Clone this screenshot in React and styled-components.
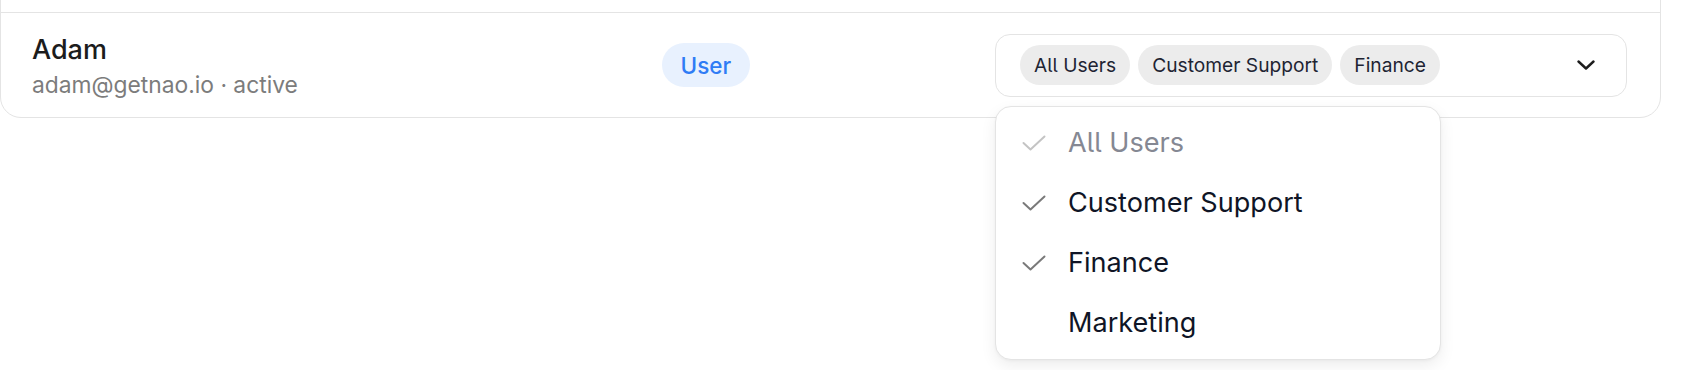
import React from "react";
import styled, { createGlobalStyle } from "styled-components";

const GlobalStyle = createGlobalStyle`
  html, body {
    margin: 0;
    padding: 0;
    background: #ffffff;
  }
  body {
    font-family: Inter, "Noto Sans", "Liberation Sans", sans-serif;
    font-feature-settings: "cv05" 1;
    -webkit-font-smoothing: antialiased;
  }
`;

const Page = styled.div`
  padding: 0 21px 0 0;
  height: 370px;
  overflow: hidden;
`;

const Card = styled.div`
  margin-top: -50px;
  border: 1px solid #e4e4e4;
  border-radius: 21px;
  background: #fff;
`;

const PrevRow = styled.div`
  height: 61px;
`;

const Row = styled.div`
  display: grid;
  grid-template-columns: 1fr 333px 632px;
  align-items: center;
  height: 104px;
  padding: 0 33px 0 31px;
  border-top: 1px solid #e4e4e4;
`;

const NameBlock = styled.div`
  display: flex;
  flex-direction: column;
`;

const Name = styled.div`
  font-size: 27px;
  line-height: 36px;
  font-weight: 500;
  color: #1c1c1c;
`;

const Meta = styled.div`
  margin-top: 3px;
  font-size: 22.8px;
  line-height: 28px;
  color: #7c7c7c;
`;

const RoleCell = styled.div`
  display: flex;
`;

const Badge = styled.span`
  display: inline-flex;
  align-items: center;
  height: 44px;
  padding: 0 18.5px;
  border-radius: 999px;
  background: #e8f1fe;
  color: #2f7cf5;
  font-size: 22.5px;
  font-weight: 500;
`;

const SelectWrap = styled.div`
  position: relative;
`;

const Select = styled.div`
  display: flex;
  align-items: center;
  box-sizing: border-box;
  height: 63px;
  padding: 0 31px 0 24px;
  border: 1px solid #e4e4e4;
  border-radius: 15px;
  background: #fff;
`;

const Chips = styled.div`
  display: flex;
  flex: 1;
  gap: 8px;
`;

const Chip = styled.span`
  display: inline-flex;
  align-items: center;
  height: 40px;
  padding: 0 14px;
  border-radius: 999px;
  background: #ececec;
  color: #1e2433;
  font-size: 19.2px;
`;

const Menu = styled.div`
  position: absolute;
  top: calc(100% + 9px);
  left: 0;
  width: 446px;
  box-sizing: border-box;
  padding: 6px 0;
  border: 1px solid #e4e4e4;
  border-radius: 16px;
  background: #fff;
  box-shadow: 0 6px 16px rgba(0, 0, 0, 0.07), 0 1px 3px rgba(0, 0, 0, 0.04);
`;

const Item = styled.div`
  display: flex;
  align-items: center;
  gap: 22px;
  height: 60px;
  padding-left: 26px;
  font-size: 27.1px;
  color: ${(p) => (p.muted ? "#858893" : "#0f1526")};
`;

const CheckSlot = styled.span`
  display: inline-flex;
  width: 24px;
  color: ${(p) => (p.muted ? "#c4c4c4" : "#7a7a7a")};
`;

const Check = () => (
  <svg width="24" height="16" viewBox="0 0 24 16" fill="none">
    <path
      d="M1.5 8 L8.5 14.5 L22.5 1.5"
      stroke="currentColor"
      strokeWidth="2"
      strokeLinecap="round"
      strokeLinejoin="round"
    />
  </svg>
);

const Chevron = () => (
  <svg width="18" height="10" viewBox="0 0 18 10" fill="none">
    <path
      d="M1.5 1.5 L9 8.5 L16.5 1.5"
      stroke="#1d1d1d"
      strokeWidth="2.4"
      strokeLinecap="round"
      strokeLinejoin="round"
    />
  </svg>
);

const groups = [
  { label: "All Users", checked: true, muted: true },
  { label: "Customer Support", checked: true },
  { label: "Finance", checked: true },
  { label: "Marketing", checked: false },
];

export default function App() {
  const selected = groups.filter((g) => g.checked);
  return (
    <Page>
      <GlobalStyle />
      <Card>
        <PrevRow />
        <Row>
          <NameBlock>
            <Name>Adam</Name>
            <Meta>adam@getnao.io · active</Meta>
          </NameBlock>
          <RoleCell>
            <Badge>User</Badge>
          </RoleCell>
          <SelectWrap>
            <Select>
              <Chips>
                {selected.map((g) => (
                  <Chip key={g.label}>{g.label}</Chip>
                ))}
              </Chips>
              <Chevron />
            </Select>
            <Menu>
              {groups.map((g) => (
                <Item key={g.label} muted={g.muted}>
                  <CheckSlot muted={g.muted}>{g.checked && <Check />}</CheckSlot>
                  {g.label}
                </Item>
              ))}
            </Menu>
          </SelectWrap>
        </Row>
      </Card>
    </Page>
  );
}
